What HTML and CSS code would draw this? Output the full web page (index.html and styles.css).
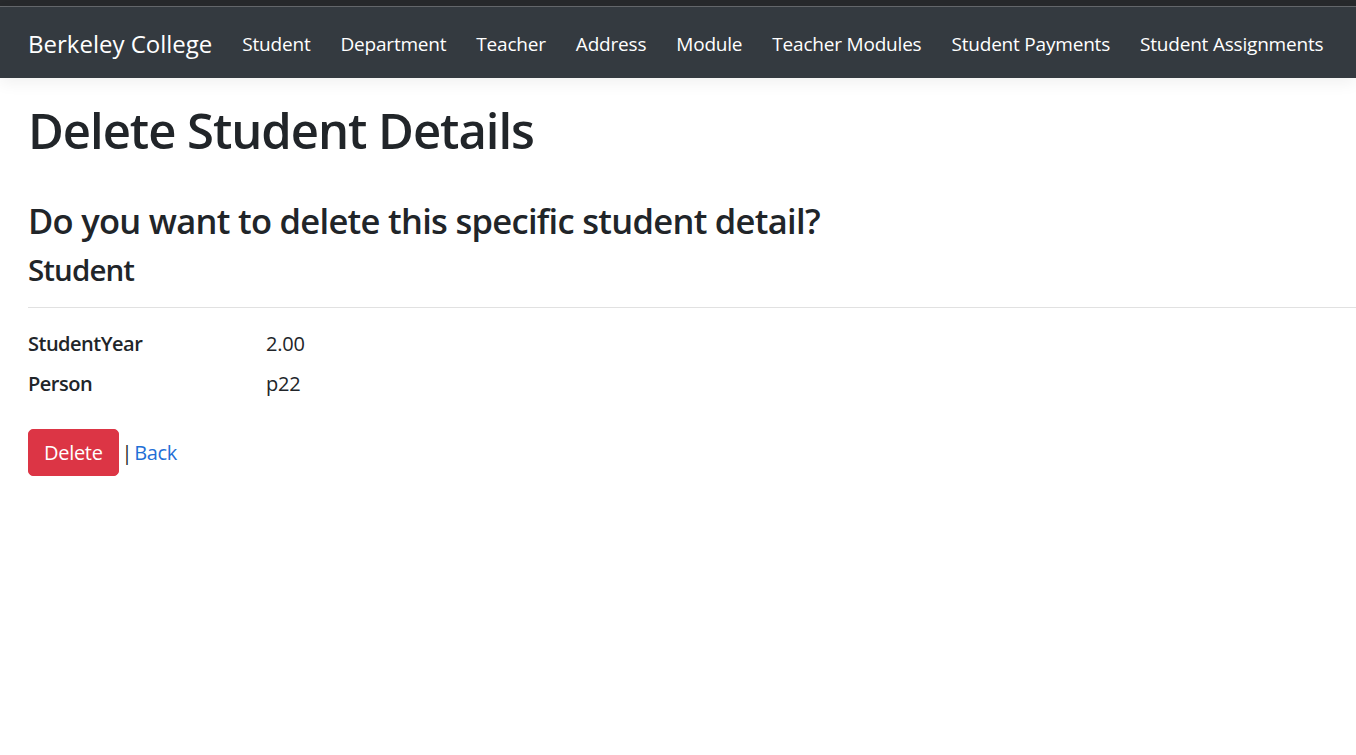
FILE: index.html
```html
<!DOCTYPE html>
<html lang="en">
<head>
<meta charset="utf-8">
<title>Delete - Berkeley College</title>
<link rel="stylesheet" href="styles.css">
</head>
<body>
<div class="topstrip"></div>
<header>
  <nav class="navbar">
    <a class="brand" href="#">Berkeley College</a>
    <ul class="nav">
      <li><a class="nav-link" href="#">Student</a></li>
      <li><a class="nav-link" href="#">Department</a></li>
      <li><a class="nav-link" href="#">Teacher</a></li>
      <li><a class="nav-link" href="#">Address</a></li>
      <li><a class="nav-link" href="#">Module</a></li>
      <li><a class="nav-link" href="#">Teacher Modules</a></li>
      <li><a class="nav-link" href="#">Student Payments</a></li>
      <li><a class="nav-link" href="#">Student Assignments</a></li>
    </ul>
  </nav>
</header>
<main class="main">
  <h1 class="title">Delete Student Details</h1>
  <h3 class="question">Do you want to delete this specific student detail?</h3>
  <div>
    <h4 class="entity">Student</h4>
    <hr class="rule">
    <dl class="details">
      <dt>StudentYear</dt>
      <dd>2.00</dd>
      <dt>Person</dt>
      <dd>p22</dd>
    </dl>
    <form class="actions">
      <button type="button" class="btn-danger">Delete</button><span class="sep">|</span><a class="back" href="#">Back</a>
    </form>
  </div>
</main>
</body>
</html>
```

FILE: styles.css
```css
* { box-sizing: border-box; }

html, body {
  margin: 0;
  padding: 0;
  background: #fff;
  overflow-x: hidden;
}

body {
  font-family: "Open Sans", "Noto Sans", "Liberation Sans", sans-serif;
  font-size: 20px;
  line-height: 1.5;
  color: #212529;
  letter-spacing: -0.25px;
}

.topstrip {
  height: 7px;
  background: #27292c;
  border-bottom: 1px solid #65686c;
}

.navbar {
  display: flex;
  align-items: center;
  height: 71px;
  padding: 2px 0 0 28px;
  background: #343a40;
  box-shadow: 0 5px 15px rgba(0, 0, 0, 0.06);
  white-space: nowrap;
}

.brand {
  font-size: 24px;
  line-height: 37.5px;
  color: #fff;
  text-decoration: none;
  margin-right: 15px;
  letter-spacing: 0;
}

.nav {
  display: flex;
  list-style: none;
  margin: 0;
  padding: 0;
}

.nav-link {
  display: block;
  padding: 10px 15px;
  font-size: 19px;
  color: #fff;
  text-decoration: none;
  line-height: 30px;
  letter-spacing: -0.2px;
}

.main {
  padding: 22px 0 0 28px;
}

.title {
  margin: 0 0 40px;
  font-size: 49px;
  line-height: 60px;
  font-weight: 600;
  letter-spacing: -1.05px;
}

.question {
  margin: 0 0 10px;
  font-size: 34.5px;
  line-height: 42px;
  font-weight: 600;
  letter-spacing: -0.7px;
}

.entity {
  margin: 0;
  font-size: 29.5px;
  line-height: 36px;
  font-weight: 600;
  letter-spacing: -0.9px;
}

.rule {
  margin: 19px 0 20px;
  border: 0;
  border-top: 1px solid #e1e1e1;
  height: 0;
}

.details {
  display: grid;
  grid-template-columns: 238px 1fr;
  margin: 0 0 20px;
  padding-top: 1px;
}

.details dt {
  font-weight: 600;
  margin: 0 0 10px;
  letter-spacing: -0.5px;
}

.details dd {
  margin: 0 0 10px;
}

.actions {
  margin: 0;
}

.btn-danger {
  display: inline-block;
  font-family: inherit;
  font-size: 20px;
  line-height: 30px;
  letter-spacing: -0.3px;
  padding: 7.5px 15px;
  color: #fff;
  background: #dc3545;
  border: 1px solid #dc3545;
  border-radius: 5px;
  vertical-align: baseline;
}

.sep {
  color: #212529;
  margin-left: 3px;
}

.back {
  color: #1f6fd6;
  text-decoration: none;
  margin-left: 2px;
  letter-spacing: -0.4px;
}
```
